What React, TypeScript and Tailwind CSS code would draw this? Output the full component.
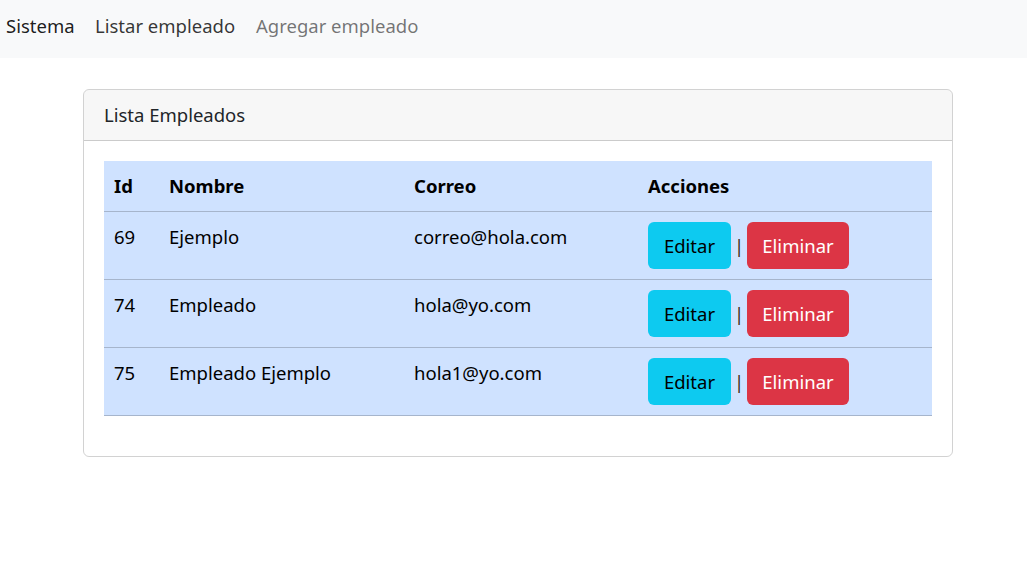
import React from "react";

const rows = [
  { id: 69, nombre: "Ejemplo", correo: "correo@hola.com" },
  { id: 74, nombre: "Empleado", correo: "hola@yo.com" },
  { id: 75, nombre: "Empleado Ejemplo", correo: "hola1@yo.com" },
];

export default function App() {
  return (
    <div
      className="min-h-[581px] bg-white text-[18.5px] leading-[30px] text-[#212529]"
      style={{ fontFamily: '"Noto Sans", "Open Sans", sans-serif' }}
    >
      <nav className="flex h-[58px] items-center bg-[#f8f9fa] pb-[6px] pl-[6px]">
        <span className="w-[68px] text-[rgba(0,0,0,0.9)]">Sistema</span>
        <span className="ml-[21px] w-[140px] whitespace-nowrap text-[rgba(0,0,0,0.8)]">Listar empleado</span>
        <span className="ml-[21px] whitespace-nowrap text-[rgba(0,0,0,0.55)]">Agregar empleado</span>
      </nav>
      <div className="pl-[83px] pt-[31px]">
        <div className="w-[870px] overflow-hidden rounded-[6px] border border-[rgba(0,0,0,0.175)]">
          <div className="flex h-[51px] items-center border-b border-[rgba(0,0,0,0.175)] bg-[rgba(0,0,0,0.03)] px-[20px]">
            Lista Empleados
          </div>
          <div className="p-[20px]">
            <table className="mb-[20px] w-[828px] table-fixed border-collapse bg-[#cfe2ff] text-black">
              <colgroup>
                <col className="w-[55px]" />
                <col className="w-[245px]" />
                <col className="w-[234px]" />
                <col className="w-[294px]" />
              </colgroup>
              <thead>
                <tr className="border-b border-[#a6b5cc]">
                  <th className="p-[10px] text-left font-bold">Id</th>
                  <th className="p-[10px] text-left font-bold">Nombre</th>
                  <th className="p-[10px] text-left font-bold">Correo</th>
                  <th className="p-[10px] text-left font-bold">Acciones</th>
                </tr>
              </thead>
              <tbody>
                {rows.map((r) => (
                  <tr key={r.id} className="border-b border-[#a6b5cc]">
                    <td className="h-[68px] p-[10px] align-top">{r.id}</td>
                    <td className="p-[10px] align-top whitespace-nowrap">{r.nombre}</td>
                    <td className="p-[10px] align-top whitespace-nowrap">{r.correo}</td>
                    <td className="p-[10px] align-top">
                      <div className="flex items-center">
                        <button className="flex h-[47px] w-[83px] items-center justify-center rounded-[6px] bg-[#0dcaf0] text-black">
                          Editar
                        </button>
                        <span className="w-[16px] text-center text-[#3a2a10]">|</span>
                        <button className="flex h-[47px] w-[102px] items-center justify-center rounded-[6px] bg-[#dc3545] text-white">
                          Eliminar
                        </button>
                      </div>
                    </td>
                  </tr>
                ))}
              </tbody>
            </table>
          </div>
        </div>
      </div>
    </div>
  );
}
